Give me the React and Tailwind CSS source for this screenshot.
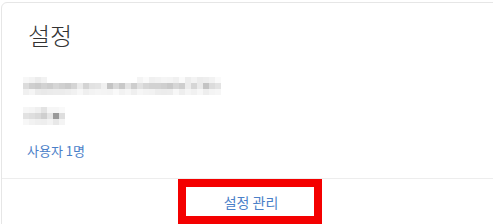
import React from 'react';

// blurred (mosaic) placeholder rows, 6px cells
const line1 = [
  ['#f7f7f7', '#f3f3f3', '#ececec', '#f2f2f2', '#fff', '#fff', '#fff', '#fff', '#fff', '#fff', '#fff', '#fff', '#fff', '#fff', '#fff', '#fff', '#fff', '#fff', '#fff', '#f4f4f4', '#fafafa', '#f0f0f0', '#f2f2f2', '#f5f5f5', '#f4f4f4', '#f0f0f0', '#fafafa', '#ededed', '#f3f3f3', '#ececec', '#eeeeee', '#f2f2f2', '#fafafa'],
  ['#dcdcdc', '#cfcfcf', '#cbcbcb', '#d2d2d2', '#cdcdcd', '#d6d6d6', '#d0d0d0', '#cbcbcb', '#d5d5d5', '#ebebeb', '#d4d4d4', '#e2e2e2', '#e4e4e4', '#f0f0f0', '#c4c4c4', '#d9d9d9', '#c9c9c9', '#e4e4e4', '#cecece', '#e1e1e1', '#d6d6d6', '#d2d2d2', '#d2d2d2', '#cfcfcf', '#c9c9c9', '#d6d6d6', '#cecece', '#ececec', '#d6d6d6', '#eaeaea', '#c4c4c4', '#dcdcdc', '#e3e3e3'],
  ['#f0f0f0', '#f5f5f5', '#ebebeb', '#e9e9e9', '#ebebeb', '#ececec', '#ececec', '#eeeeee', '#f1f1f1', '#f7f7f7', '#efefef', '#f3f3f3', '#f5f5f5', '#f4f4f4', '#f3f3f3', '#f9f9f9', '#f2f2f2', '#f6f6f6', '#efefef', '#f6f6f6', '#f3f3f3', '#f2f2f2', '#ededed', '#ececec', '#ededed', '#f7f7f7', '#eeeeee', '#f5f5f5', '#f1f1f1', '#f7f7f7', '#eeeeee', '#f4f4f4', '#f6f6f6'],
];

const line2 = [
  ['#f6f6f6', '#f4f4f4', '#efefef', '#e3e3e3', '#f6f6f6', '#f6f6f6', '#f9f9f9'],
  ['#e2e2e2', '#dedede', '#d9d9d9', '#cfcfcf', '#e5e5e5', '#9a9a9a', '#dedede'],
  ['#f7f7f7', '#f2f2f2', '#efefef', '#eeeeee', '#f3f3f3', '#e8e8e8', '#f4f4f4'],
];

function Mosaic({ rows }) {
  return (
    <div className="flex flex-col">
      {rows.map((row, r) => (
        <div key={r} className="flex">
          {row.map((c, i) => (
            <div key={i} className="w-[6px] h-[6px]" style={{ backgroundColor: c }} />
          ))}
        </div>
      ))}
    </div>
  );
}

export default function App() {
  return (
    <div
      className="w-[493px] h-[224px] overflow-hidden bg-white pt-[2px] pl-px"
      style={{ fontFamily: '"Noto Sans CJK KR", "Noto Sans", Roboto, sans-serif' }}
    >
      <div className="w-[498px] h-[240px] border border-[#e6e6e6] rounded-tl-md bg-white flex flex-col">
        <div className="pl-[21px] pt-[16px] h-[175px]">
          <h2 className="text-[24px] leading-[32px] font-light text-[#333333] pl-[5px]">설정</h2>
          <div className="mt-[26px]">
            <Mosaic rows={line1} />
          </div>
          <div className="mt-[12px]">
            <Mosaic rows={line2} />
          </div>
          <div className="mt-[16px] pl-[4px] text-[13px] leading-[20px] text-[#4a80c8]">사용자 1명</div>
        </div>
        <div className="border-t border-[#ededed] flex justify-center">
          <div className="border-[8px] border-[#f40000] w-[144px] h-[45px] flex items-center justify-center">
            <span className="text-[14px] leading-[20px] text-[#4a80c8] pl-[2px]">설정 관리</span>
          </div>
        </div>
      </div>
    </div>
  );
}
